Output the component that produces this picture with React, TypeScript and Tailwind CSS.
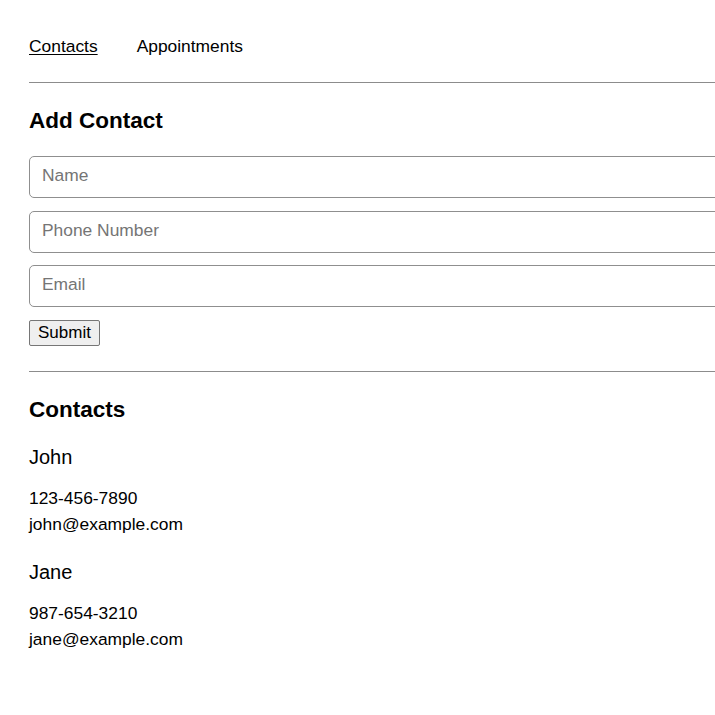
import { useState } from "react";

type Contact = { name: string; phone: string; email: string };

export default function App() {
  const [contacts] = useState<Contact[]>([
    { name: "John", phone: "123-456-7890", email: "john@example.com" },
    { name: "Jane", phone: "987-654-3210", email: "jane@example.com" },
  ]);

  return (
    <div className="h-[715px] w-full overflow-hidden bg-white font-['Liberation_Sans',Arial,sans-serif] text-[17.4px] text-black">
      <div className="w-[820px] pl-[29px] pt-[35px]">
        <nav className="flex gap-[39px] leading-[22px]">
          <a href="#" className="underline underline-offset-2">Contacts</a>
          <a href="#">Appointments</a>
        </nav>

        <hr className="mt-[25px] border-t border-[#8c8c8c]" />

        <h2 className="mt-[24px] text-[22.5px] font-bold leading-[28px]">Add Contact</h2>

        <form className="mt-[21px] flex flex-col" onSubmit={(e) => e.preventDefault()}>
          <input placeholder="Name" className="h-[42px] rounded-[5px] border border-[#8f8f8f] px-[12px] pb-[4px] text-[17.4px] placeholder:text-[#757575]" />
          <input placeholder="Phone Number" className="mt-[13px] h-[42px] rounded-[5px] border border-[#8f8f8f] px-[12px] pb-[4px] text-[17.4px] placeholder:text-[#757575]" />
          <input placeholder="Email" className="mt-[12px] h-[42px] rounded-[5px] border border-[#8f8f8f] px-[12px] pb-[4px] text-[17.4px] placeholder:text-[#757575]" />
          <div className="mt-[12px]">
            <button type="submit" className="h-[26px] rounded-[2px] border border-[#767676] bg-[#efefef] px-[8px] text-[17px] leading-[20px]">Submit</button>
          </div>
        </form>

        <hr className="mt-[25px] border-t border-[#8c8c8c]" />

        <h2 className="mt-[24px] text-[22.5px] font-bold leading-[28px]">Contacts</h2>

        <div className="mt-[21px] flex flex-col gap-[23px]">
          {contacts.map((c) => (
            <div key={c.email}>
              <h3 className="text-[20px] leading-[24px]">{c.name}</h3>
              <p className="mt-[16px] leading-[26px]">{c.phone}<br />{c.email}</p>
            </div>
          ))}
        </div>
      </div>
    </div>
  );
}
